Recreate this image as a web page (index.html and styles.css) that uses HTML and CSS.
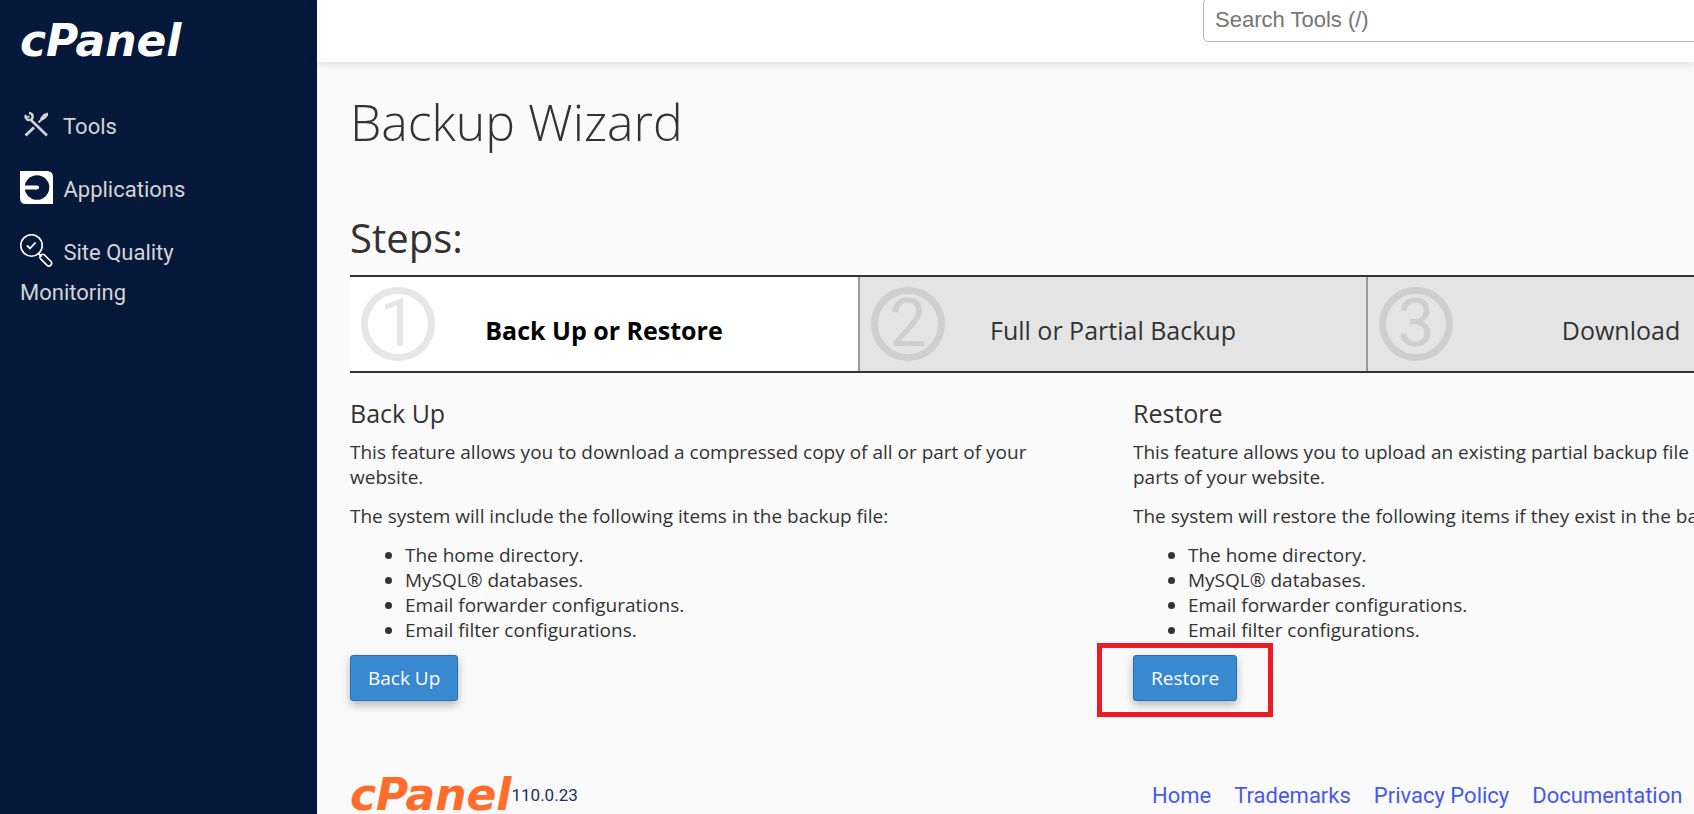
FILE: index.html
```
<!DOCTYPE html>
<html lang="en">
<head>
    <meta charset="UTF-8">
    <meta name="viewport" content="width=device-width, initial-scale=1.0">
    <link rel="stylesheet" href="styles.css">
    <title>cPanel - Backup Wizard</title>
</head>
<body>

    <div class="layout">
        <aside class="sidebar">
            <a href="#" class="logo">cPanel</a>
            <nav class="side-nav">
                <a href="#">
                    <svg class="icon" viewBox="0 0 33 33" fill="none" stroke="#d4d4d4">
                        <path d="M11 12 L27 27.500" stroke-width="2.600"/>
                        <path d="M5.500 27.500 L14 19.500" stroke-width="2.800"/>
                        <path d="M18.500 14.500 L22 11" stroke-width="2"/>
                        <path d="M20 10.500 L23.500 6 L28 4.500 L28 7.500 L25 11 L22 12.500 Z" fill="#d4d4d4" stroke="none"/>
                        <path d="M5.500 7.500 C5 11 8 13 11 11.500 C13.500 10 13.500 5.500 9 5" stroke-width="2.400"/>
                        <path d="M5 7 L8 9.500 L9.500 8" stroke-width="1.500"/>
                    </svg>
                    Tools
                </a>
                <a href="#">
                    <svg class="icon" viewBox="0 0 33 33">
                        <path d="M0 0 H27 Q33 0 33 6 V33 H6 Q0 33 0 27 Z" fill="#fff"/>
                        <circle cx="17" cy="16.500" r="12.300" fill="#06193b"/>
                        <path d="M4 16.500 H17" stroke="#fff" stroke-width="4" stroke-linecap="round"/>
                    </svg>
                    Applications
                </a>
                <a href="#">
                    <svg class="icon" viewBox="0 0 33 33" fill="none" stroke="#fff" stroke-linecap="round">
                        <circle cx="11.500" cy="11.500" r="10.700" stroke-width="1.600"/>
                        <path d="M7.500 12 L10 14.500 L15 9" stroke-width="1.800"/>
                        <path d="M18.500 19.500 L21 22" stroke-width="2"/>
                        <rect x="19" y="23.500" width="14" height="5.500" rx="2.750" transform="rotate(45 26 26)" stroke-width="1.600"/>
                    </svg>
                    Site Quality Monitoring
                </a>
            </nav>
        </aside>

        <div class="page">
            <header class="topbar">
                <input type="search" class="search" placeholder="Search Tools (/)" aria-label="Search Tools">
            </header>

            <main class="content">
                <h1>Backup Wizard</h1>
                <h2>Steps:</h2>

                <ol class="steps">
                    <li class="active"><span class="number">1</span>Back Up or Restore</li>
                    <li><span class="number">2</span>Full or Partial Backup</li>
                    <li><span class="number">3</span>Download</li>
                </ol>

                <div class="columns">
                    <section>
                        <h3>Back Up</h3>
                        <p>This feature allows you to download a compressed copy of all or part of your website.</p>
                        <p>The system will include the following items in the backup file:</p>
                        <ul>
                            <li>The home directory.</li>
                            <li>MySQL® databases.</li>
                            <li>Email forwarder configurations.</li>
                            <li>Email filter configurations.</li>
                        </ul>
                        <button type="button" class="btn">Back Up</button>
                    </section>
                    <section>
                        <h3>Restore</h3>
                        <p>This feature allows you to upload an existing partial backup file to restore<br>parts of your website.</p>
                        <p>The system will restore the following items if they exist in the backup file:</p>
                        <ul>
                            <li>The home directory.</li>
                            <li>MySQL® databases.</li>
                            <li>Email forwarder configurations.</li>
                            <li>Email filter configurations.</li>
                        </ul>
                        <div class="marked">
                            <button type="button" class="btn">Restore</button>
                        </div>
                    </section>
                </div>

                <footer class="columns footer">
                    <div class="version">
                        <a href="#" class="logo">cPanel</a>
                        <span>110.0.23</span>
                    </div>
                    <nav class="footer-nav">
                        <a href="#">Home</a>
                        <a href="#">Trademarks</a>
                        <a href="#">Privacy Policy</a>
                        <a href="#">Documentation</a>
                    </nav>
                </footer>
            </main>
        </div>
    </div>

</body>
</html>
```
FILE: styles.css
```
:root {
    --navy: #06193b;
    --orange: #ff6c2c;
    --text: #333;
    --link: #4559ee;
    --blue: #3889cf;
}

* {
    box-sizing: border-box;
}

body {
    margin: 0;
    background-color: #fafafa;
    color: var(--text);
    font-family: "Open Sans", sans-serif;
    font-size: 19px;
    line-height: 25px;
}

a {
    text-decoration: none;
}

.layout {
    display: flex;
    min-height: 100vh;
    overflow: hidden;
}

/* sidebar */
.sidebar {
    flex: 0 0 317px;
    padding: 23px 20px;
    background-color: var(--navy);
}

.logo {
    display: block;
    color: #fff;
    font-family: "DejaVu Sans", sans-serif;
    font-size: 44px;
    font-style: italic;
    font-weight: 700;
    line-height: 36px;
}

.side-nav {
    display: flex;
    flex-direction: column;
    gap: 23px;
    margin-top: 48px;
}

.side-nav a {
    padding-right: 40px;
    color: #d4d4d4;
    font-family: Roboto, sans-serif;
    font-size: 22px;
    line-height: 40px;
}

.icon {
    width: 33px;
    height: 33px;
    margin-right: 5px;
    vertical-align: -7px;
}

/* header */
.page {
    flex: 1;
    min-width: 0;
}

.topbar {
    display: flex;
    justify-content: flex-end;
    height: 62px;
    background-color: #fff;
    box-shadow: 0 2px 8px rgba(0, 0, 0, 0.12);
}

.search {
    flex: 0 0 500px;
    height: 44px;
    margin-top: -2px;
    margin-right: -9px;
    padding: 0 11px;
    border: 1px solid #b0b8c8;
    border-radius: 5px;
    font-family: "Liberation Sans", sans-serif;
    font-size: 22px;
}

.search::placeholder {
    color: #757575;
}

/* content */
.content {
    min-width: 1569px;
    padding: 25px 0 0 33px;
}

h1,
h2,
h3,
p,
ul,
ol {
    margin: 0;
}

h1 {
    font-size: 50px;
    font-weight: 300;
    line-height: 70px;
}

h2 {
    margin-top: 53px;
    font-size: 40px;
    font-weight: 400;
    line-height: 56px;
}

h3 {
    margin-bottom: 13px;
    font-size: 25px;
    font-weight: 400;
    line-height: 28px;
}

.steps {
    display: grid;
    grid-template-columns: repeat(3, 508px);
    width: max-content;
    margin-top: 9px;
    border-top: 2px solid var(--text);
    border-bottom: 2px solid var(--text);
    list-style: none;
    padding: 0;
}

.steps li {
    position: relative;
    padding: 36px 0 24px;
    background-color: #e4e4e4;
    font-size: 25px;
    line-height: 34px;
    text-align: center;
}

.steps li + li {
    border-left: 2px solid #999;
}

.steps .active {
    background-color: #fff;
    color: #000;
    font-weight: 700;
}

/* big step number behind the label */
.number {
    position: absolute;
    top: 10px;
    left: 11px;
    width: 74px;
    height: 74px;
    border: 7px solid #cfcfcf;
    border-radius: 50%;
    color: #cfcfcf;
    font-family: Roboto, sans-serif;
    font-size: 66px;
    font-weight: 400;
    line-height: 60px;
}

.active .number {
    border-color: #e6e6e6;
    color: #e6e6e6;
}

.columns {
    display: grid;
    grid-template-columns: 1fr 1fr;
    column-gap: 30px;
    margin-top: 26px;
}

.columns p {
    margin-bottom: 14px;
}

.columns ul {
    margin-bottom: 12px;
    padding-left: 55px;
}

.btn {
    display: block;
    height: 46px;
    padding: 0 17px;
    border: 1px solid #2a6fb0;
    border-radius: 3px;
    background-color: var(--blue);
    box-shadow: 0 4px 10px rgba(0, 0, 0, 0.28);
    color: #fff;
    font-family: inherit;
    font-size: 19px;
    cursor: pointer;
}

.btn:hover {
    background-color: #2a6fb0;
}

.marked {
    position: relative;
    width: max-content;
}

.marked::after {
    content: "";
    position: absolute;
    inset: -12px -36px -16px;
    border: 5px solid #ed1c24;
    pointer-events: none;
}

/* footer */
.footer {
    margin-top: 76px;
    font-family: Roboto, sans-serif;
}

.version {
    display: flex;
    align-items: center;
    color: #1d2d6b;
    font-size: 17px;
}

.version .logo {
    color: var(--orange);
}

.footer-nav {
    display: flex;
    align-items: center;
    gap: 23px;
    padding-left: 19px;
    font-size: 22px;
}

.footer-nav a {
    color: var(--link);
}
```
